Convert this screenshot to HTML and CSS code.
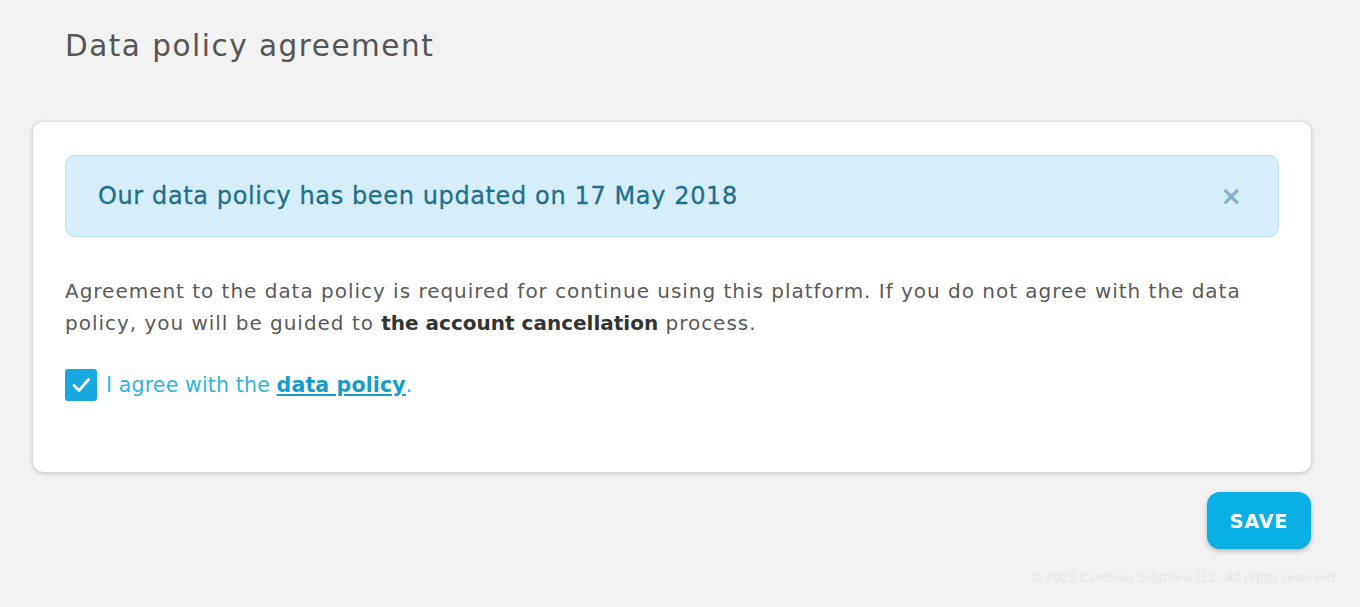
FILE: index.html
```html
<!DOCTYPE html>
<html>
<head>
<meta charset="utf-8">
<link rel="stylesheet" href="styles.css">
</head>
<body>
<div class="page">
  <h1 class="title">Data policy agreement</h1>
  <div class="card">
    <div class="alert">
      <span class="alert-text">Our data policy has been updated on 17 May 2018</span>
      <span class="alert-close">&#215;</span>
    </div>
    <p class="desc">Agreement to the data policy is required for continue using this platform. If you do not agree with the data policy, you will be guided to <b>the account cancellation</b> process.</p>
    <label class="agree">
      <span class="checkbox"><svg width="22" height="22" viewBox="0 0 22 22"><path d="M4 11.5 L9 16.5 L18.5 5.5" fill="none" stroke="#fff" stroke-width="2.8" stroke-linecap="round" stroke-linejoin="round"/></svg></span>
      <span class="agree-text">I agree with the <a class="link" href="#">data policy</a>.</span>
    </label>
  </div>
  <div class="actions">
    <button class="save">SAVE</button>
  </div>
  <div class="footer">© 2023 Cambola Solutions LLC. All rights reserved</div>
</div>
</body>
</html>
```
FILE: styles.css
```css
html, body {
  margin: 0;
  padding: 0;
  background: #f2f2f2;
}
body {
  font-family: "DejaVu Sans", sans-serif;
  color: #555;
}
.page {
  padding: 0 49px 0 33px;
}
.title {
  margin: 0;
  padding: 28px 0 0 32px;
  height: 122px;
  box-sizing: border-box;
  font-size: 29.5px;
  font-weight: 500;
  color: #555;
  letter-spacing: 1.5px;
  line-height: 36px;
}
.card {
  background: #fff;
  border-radius: 10px;
  box-shadow: 0 1px 5px rgba(0,0,0,0.22);
  padding: 33px 32px 66px 32px;
  height: 350px;
  box-sizing: border-box;
}
.alert {
  height: 82px;
  box-sizing: border-box;
  background: #d6eef9;
  border: 1px solid #b2e3ee;
  border-radius: 10px;
  display: flex;
  align-items: center;
  justify-content: space-between;
  padding: 0 36px 0 32px;
}
.alert-text {
  font-size: 24px;
  color: #1f6f8e;
  letter-spacing: 0.62px;
  -webkit-text-stroke: 0.3px #1f6f8e;
}
.alert-close {
  font-size: 26px;
  font-weight: bold;
  color: #7fb3c9;
  line-height: 1;
}
.desc {
  margin: 38px 0 0 0;
  font-size: 20px;
  line-height: 32px;
  color: #5a5a5a;
  letter-spacing: 0.98px;
}
.desc b {
  color: #333;
  font-weight: bold;
  letter-spacing: 0;
}
.agree {
  display: flex;
  align-items: center;
  margin-top: 30px;
  gap: 9px;
}
.checkbox {
  width: 32px;
  height: 32px;
  border-radius: 3px;
  background: #17a8e0;
  display: flex;
  align-items: center;
  justify-content: center;
}
.agree-text {
  font-size: 20.5px;
  color: #30b4e2;
  letter-spacing: 0.15px;
}
.link {
  color: #139ccd;
  font-weight: bold;
  text-decoration: underline;
}
.actions {
  display: flex;
  justify-content: flex-end;
  margin-top: 20px;
}
.save {
  width: 104px;
  height: 57px;
  border: none;
  border-radius: 13px;
  background: #0aafe6;
  color: #fff;
  font-family: "DejaVu Sans", sans-serif;
  font-weight: bold;
  font-size: 19px;
  letter-spacing: 0.9px;
  box-shadow: 0 2px 5px rgba(0,0,0,0.25);
}
.footer {
  text-align: right;
  margin-top: 22px;
  margin-right: -24px;
  font-size: 12px;
  color: #e6e6e6;
}
```
